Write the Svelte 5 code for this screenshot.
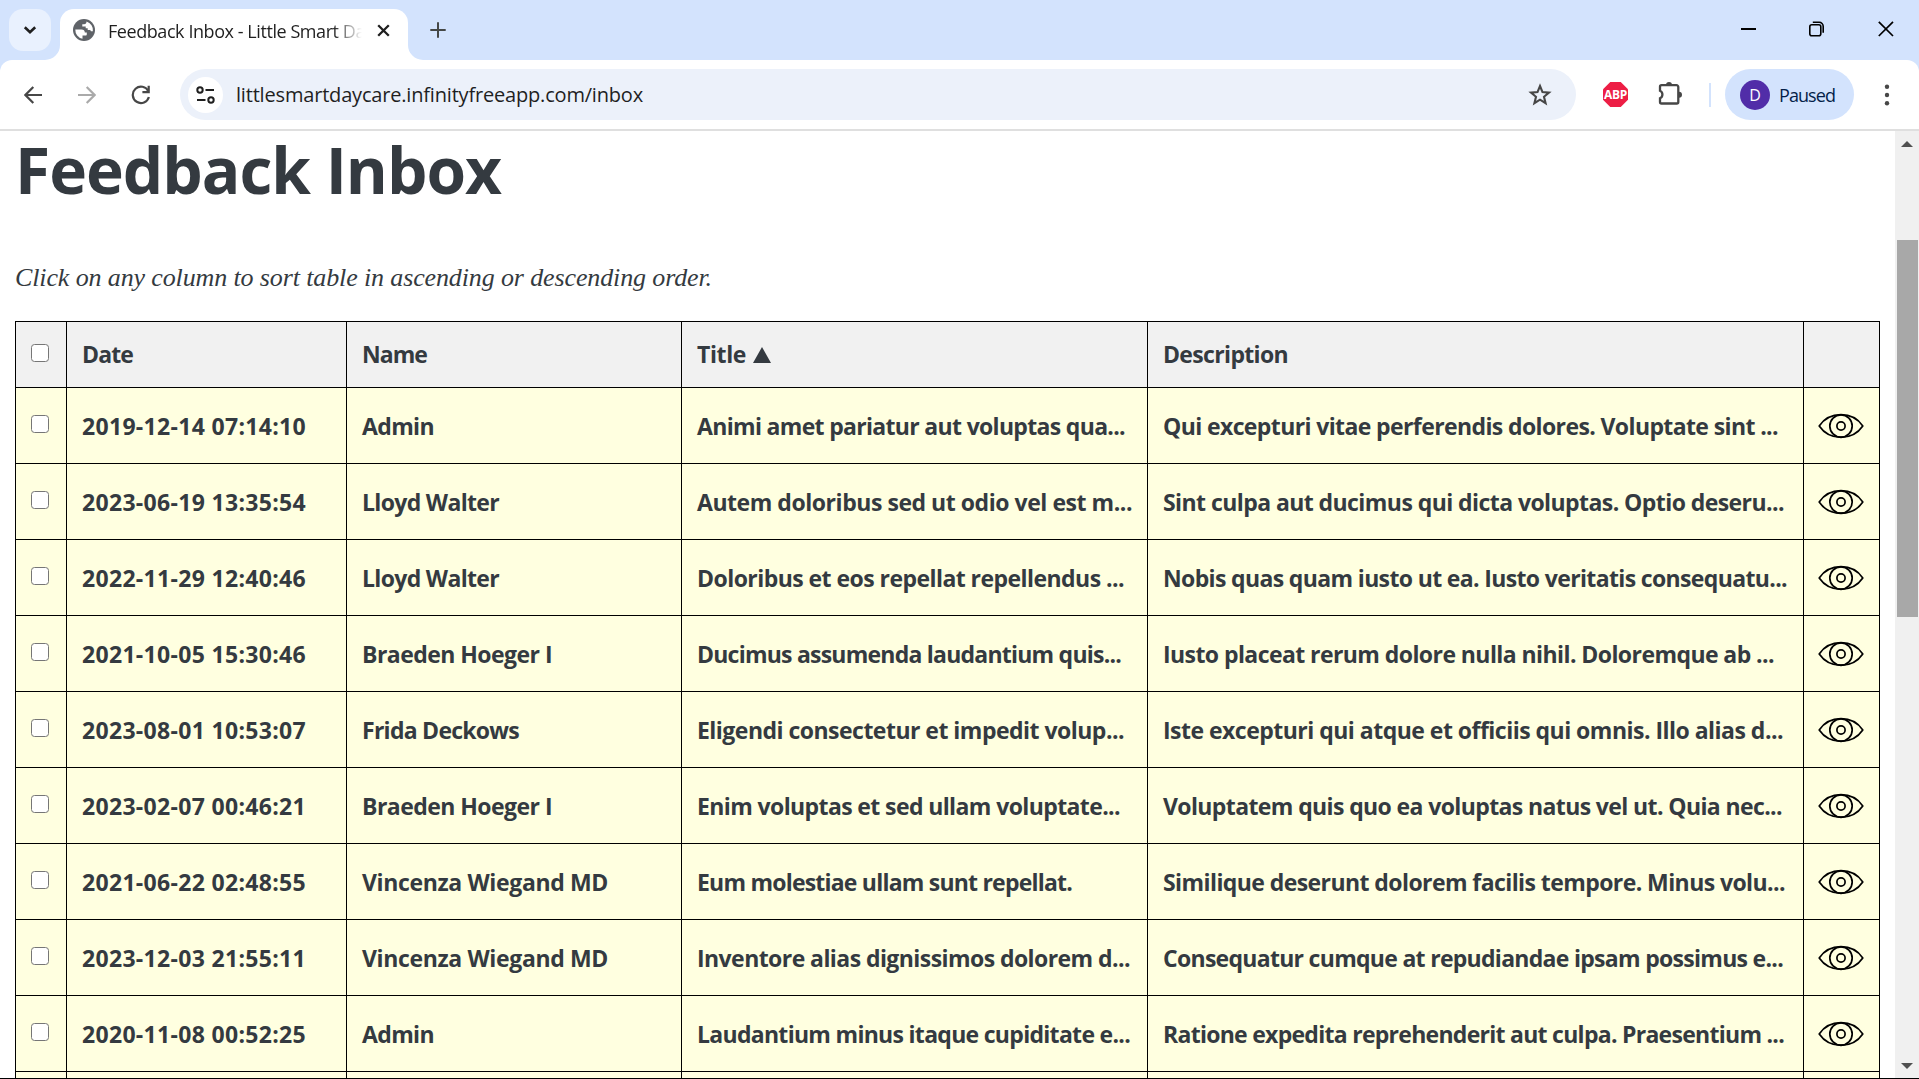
<script>
  // Letter-spacing is computed so each label takes the given width in pixels.
  function fit(node, width) {
    const range = document.createRange();
    const apply = (w) => {
      if (!w) return;
      node.style.letterSpacing = '0px';
      range.selectNodeContents(node);
      const natural = range.getBoundingClientRect().width;
      node.style.letterSpacing = (w - natural) / node.textContent.length + 'px';
    };
    apply(width);
    return { update: apply };
  }

  const headers = [
    { label: 'Date', w: 51 },
    { label: 'Name', w: 65 },
    { label: 'Title', w: 49, sorted: true },
    { label: 'Description', w: 125 },
  ];

  const rows = [
    [['2019-12-14 07:14:10', 224], ['Admin', 72], ['Animi amet pariatur aut voluptas qua...', 428], ['Qui excepturi vitae perferendis dolores. Voluptate sint ...', 615]],
    [['2023-06-19 13:35:54', 224], ['Lloyd Walter', 137], ['Autem doloribus sed ut odio vel est m...', 435], ['Sint culpa aut ducimus qui dicta voluptas. Optio deseru...', 621]],
    [['2022-11-29 12:40:46', 224], ['Lloyd Walter', 137], ['Doloribus et eos repellat repellendus ...', 427], ['Nobis quas quam iusto ut ea. Iusto veritatis consequatu...', 624]],
    [['2021-10-05 15:30:46', 224], ['Braeden Hoeger I', 190], ['Ducimus assumenda laudantium quis...', 424], ['Iusto placeat rerum dolore nulla nihil. Doloremque ab ...', 611]],
    [['2023-08-01 10:53:07', 224], ['Frida Deckows', 157], ['Eligendi consectetur et impedit volup...', 427], ['Iste excepturi qui atque et officiis qui omnis. Illo alias d...', 620]],
    [['2023-02-07 00:46:21', 224], ['Braeden Hoeger I', 190], ['Enim voluptas et sed ullam voluptate...', 423], ['Voluptatem quis quo ea voluptas natus vel ut. Quia nec...', 619]],
    [['2021-06-22 02:48:55', 224], ['Vincenza Wiegand MD', 246], ['Eum molestiae ullam sunt repellat.', 375], ['Similique deserunt dolorem facilis tempore. Minus volu...', 622]],
    [['2023-12-03 21:55:11', 224], ['Vincenza Wiegand MD', 246], ['Inventore alias dignissimos dolorem d...', 433], ['Consequatur cumque at repudiandae ipsam possimus e...', 620]],
    [['2020-11-08 00:52:25', 224], ['Admin', 72], ['Laudantium minus itaque cupiditate e...', 433], ['Ratione expedita reprehenderit aut culpa. Praesentium ...', 621]],
  ];
</script>

<div class="window">
  <div class="tabstrip">
    <button class="tabsearch" aria-label="Search tabs">
      <svg width="14" height="10" viewBox="0 0 14 10"><path d="M1.8 2.2 7 7.2l5.200-5" fill="none" stroke="#1f1f1f" stroke-width="2.6" /></svg>
    </button>
    <div class="tab">
      <svg class="flare" width="15" height="15" viewBox="0 0 15 15"><path d="M15 0v15H0A15 15 0 0 0 15 0Z" fill="#fff" /></svg>
      <div class="tabbody">
        <svg class="globe" width="22" height="22" viewBox="0 0 22 22">
          <circle cx="11" cy="11" r="11" fill="#5f6368" />
          <path d="M2.300 10.600h6.200c2.200 0 3.300 1.200 3.300 3h2v1.700c0 .8-.4 1.300-1.200 1.300H9.500v3.200A9 9 0 0 1 2.300 10.600Z" fill="#fff" />
          <path d="M13.500 2.500c0 1.700-.8 2.700-2.400 2.700H9.300v2.200h3.400v1.800h2v1.700h1.700c1 0 1.200.5 1.500 1.400h2A9 9 0 0 0 13.500 2.500Z" fill="#fff" />
        </svg>
        <span class="tabtitle"><span use:fit={257}>Feedback Inbox - Little Smart Da</span></span>
        <svg class="tabclose" width="13" height="13" viewBox="0 0 13 13"><path d="m1.200 1.200 10.600 10.600m0-10.600L1.200 11.800" stroke="#1f1f1f" stroke-width="2.3" /></svg>
      </div>
      <svg class="flare" width="15" height="15" viewBox="0 0 15 15"><path d="M0 0v15h15A15 15 0 0 1 0 0Z" fill="#fff" /></svg>
    </div>
    <svg class="plus" width="16" height="16" viewBox="0 0 16 16"><path d="M8 .3v15.400M.3 8h15.400" stroke="#444746" stroke-width="2" /></svg>
    <div class="controls">
      <svg width="16" height="16" viewBox="0 0 16 16"><path d="M1 8h15" stroke="#000" stroke-width="2" /></svg>
      <svg width="16" height="16" viewBox="0 0 16 16"><g fill="none" stroke="#000" stroke-width="1.600"><rect x=".8" y="3.800" width="11" height="11" rx="2" /><path d="M3.800 1.300h6.200a4 4 0 0 1 4.200 4.200v6.300" /></g></svg>
      <svg width="16" height="16" viewBox="0 0 16 16"><path d="m.8.8 14.200 14.200m0-14.200L.8 15" stroke="#000" stroke-width="1.700" /></svg>
    </div>
  </div>

  <div class="toolbar">
    <svg width="18" height="18" viewBox="0 0 18 18"><path d="M18 9H2M9.300 1 1.400 9l7.900 8" fill="none" stroke="#474747" stroke-width="2.200" /></svg>
    <svg class="forward" width="18" height="18" viewBox="0 0 18 18"><path d="M0 9h16M8.700 1l7.900 8-7.900 8" fill="none" stroke="#aaa" stroke-width="2.200" /></svg>
    <svg class="reload" width="20" height="20" viewBox="0 0 20 20"><path d="M17.400 6.300A8.200 8.200 0 1 0 17.900 12" fill="none" stroke="#474747" stroke-width="2.200" /><path d="M18.800.8v7.400h-7.400V6h5.200V.8Z" fill="#474747" /></svg>
    <div class="omnibox">
      <span class="site">
        <svg width="19" height="18" viewBox="0 0 19 18"><g fill="none" stroke="#1f1f1f" stroke-width="2"><circle cx="4" cy="4" r="2.700" /><path d="M9.500 4H18M1 14h8.500" /><circle cx="15" cy="14" r="2.700" /></g></svg>
      </span>
      <span class="url" use:fit={407}>littlesmartdaycare.infinityfreeapp.com/inbox</span>
      <svg class="star" width="24" height="24" viewBox="0 0 24 24"><path d="m12 3 2.500 6.100 6.500.5-5 4.200 1.600 6.400-5.600-3.500-5.600 3.500L8 13.800 3 9.600l6.500-.5Z" fill="none" stroke="#474747" stroke-width="2.100" /></svg>
    </div>
    <span class="abp"><span use:fit={23}>ABP</span></span>
    <svg class="puzzle" width="25" height="25" viewBox="0 0 25 25">
      <path d="M3.500 4.200h15a1.800 1.800 0 0 1 1.800 1.800v15a1.500 1.500 0 0 1-1.500 1.500H3.500A1.500 1.500 0 0 1 2 21v-3.700a4.200 4.200 0 0 0 0-7.600V5.700a1.500 1.500 0 0 1 1.500-1.500Z" fill="none" stroke="#474747" stroke-width="2.300" />
      <path d="M8 4a3 3 0 0 1 6 0ZM21 10.700a3 3 0 0 1 0 6Z" fill="#474747" />
    </svg>
    <span class="divider"></span>
    <div class="profile">
      <span class="avatar">D</span>
      <span class="paused"><span use:fit={56}>Paused</span></span>
    </div>
    <svg class="dots" width="6" height="22" viewBox="0 0 6 22"><g fill="#474747"><circle cx="3" cy="2.700" r="2.200" /><circle cx="3" cy="11" r="2.200" /><circle cx="3" cy="19.300" r="2.200" /></g></svg>
  </div>

  <div class="viewport">
    <main>
      <h1><span use:fit={486}>Feedback Inbox</span></h1>
      <p><span use:fit={697}>Click on any column to sort table in ascending or descending order.</span></p>
      <table>
        <colgroup>
          <col class="c-check" /><col class="c-date" /><col class="c-name" /><col class="c-title" /><col class="c-desc" /><col class="c-eye" />
        </colgroup>
        <thead>
          <tr>
            <th><input type="checkbox" aria-label="Select all" /></th>
            {#each headers as h}
              <th><span use:fit={h.w}>{h.label}</span>{#if h.sorted}<svg class="sort" width="18" height="16" viewBox="0 0 18 16"><path d="M9 0 18 16H0Z" fill="#343a40" /></svg>{/if}</th>
            {/each}
            <th></th>
          </tr>
        </thead>
        <tbody>
          {#each rows as row}
            <tr>
              <td><input type="checkbox" aria-label="Select message" /></td>
              {#each row as [text, w]}
                <td><span use:fit={w}>{text}</span></td>
              {/each}
              <td class="eye">
                <svg width="46" height="26" viewBox="0 0 46 26"><g fill="none" stroke="#000" stroke-width="1.700"><path d="M1.200 13C6 6 14 1.700 23 1.700S40 6 44.800 13C40 20 32 24.300 23 24.300S6 20 1.200 13Z" stroke-linejoin="round" /><circle cx="23" cy="13" r="11.200" /><circle cx="23" cy="13" r="4.100" /></g></svg>
              </td>
            </tr>
          {/each}
          <tr class="next"><td></td><td></td><td></td><td></td><td></td><td></td></tr>
        </tbody>
      </table>
    </main>
    <div class="scrollbar">
      <svg width="12" height="6" viewBox="0 0 12 6"><path d="M6 0l6 6H0Z" fill="#505050" /></svg>
      <span class="thumb"></span>
      <svg class="down" width="12" height="6" viewBox="0 0 12 6"><path d="M0 0h12L6 6Z" fill="#505050" /></svg>
    </div>
  </div>
</div>

<style>
  :global(body) { margin: 0; background: #d3e3fd; }
  .window {
    box-sizing: border-box;
    width: 1919px;
    height: 1079px;
    display: flex;
    flex-direction: column;
    overflow: hidden;
    border-bottom: 1px solid #000;
    background: #d3e3fd;
    font-family: "Open Sans", "Noto Sans", sans-serif;
    white-space: nowrap;
  }
  svg { display: block; flex: none; }

  .tabstrip { height: 60px; flex: none; display: flex; align-items: flex-start; }
  .tabsearch {
    width: 42px; height: 42px; margin: 9px 0 0 9px; padding: 0; border: 0; border-radius: 14px;
    background: #e9f1fe; display: flex; align-items: center; justify-content: center;
  }
  .tab { display: flex; align-items: flex-end; height: 60px; margin-left: -6px; }
  .tabbody {
    box-sizing: border-box; width: 348px; height: 51px; padding: 0 18px 9px 13px;
    display: flex; align-items: center; background: #fff; border-radius: 14px 14px 0 0;
  }
  .tabtitle {
    width: 260px; margin-left: 13px; font-size: 18px; line-height: 26px; color: #1f1f1f;
    padding-top: 2px;
    -webkit-mask-image: linear-gradient(90deg, #000 225px, transparent 254px);
    mask-image: linear-gradient(90deg, #000 225px, transparent 254px);
  }
  .tabclose { margin-left: auto; }
  .plus { margin: 22px 0 0 7px; }
  .controls { display: flex; gap: 53px; margin: 21px 25px 0 auto; }

  .toolbar {
    box-sizing: border-box; height: 71px; flex: none; display: flex; align-items: center; padding-left: 24px;
    border-bottom: 2px solid #dfdfdf; background: #fff; border-radius: 12px 12px 0 0;
  }
  .forward { margin-left: 36px; }
  .reload { margin-left: 35px; }
  .omnibox {
    box-sizing: border-box; width: 1396px; height: 51px; margin-left: 29px; padding: 0 24px 0 8px;
    display: flex; align-items: center; border-radius: 26px; background: #ecf1fa;
  }
  .site { width: 35px; height: 36px; border-radius: 50%; background: #fff; display: flex; align-items: center; justify-content: center; }
  .url { margin-left: 13px; font-size: 20px; line-height: 28px; color: #1f1f1f; }
  .star { margin-left: auto; }
  .abp {
    width: 25px; height: 25px; margin-left: 27px; display: flex; align-items: center; justify-content: center;
    background: #ed1e45; color: #fff; font-size: 12px; font-weight: 700;
    clip-path: polygon(29% 0, 71% 0, 100% 29%, 100% 71%, 71% 100%, 29% 100%, 0 71%, 0 29%);
  }
  .puzzle { margin: -3px 0 0 30px; }
  .divider { width: 2px; height: 24px; margin-left: 26px; background: #d3e3fd; }
  .profile {
    box-sizing: border-box; width: 129px; height: 51px; margin-left: 14px; padding-left: 15px;
    display: flex; align-items: center; border-radius: 26px; background: #d3e3fd; color: #041e49; font-size: 18px;
  }
  .avatar {
    width: 30px; height: 30px; border-radius: 50%; background: #512da8; color: #fff;
    font-size: 16px; line-height: 30px; text-align: center;
  }
  .paused { margin-left: 9px; }
  .dots { margin-left: 30px; }

  .viewport { flex: 1; min-height: 0; display: flex; background: #fff; color: #343a40; }
  main { flex: 1; min-width: 0; padding-left: 15px; }
  h1 { margin: 0; font-size: 64px; line-height: 78px; font-weight: 700; }
  p { margin: 53px 0 0; font: italic 26px/32px "Liberation Serif", serif; }

  table { width: 1865px; margin-top: 27px; table-layout: fixed; border-collapse: collapse; font-size: 23px; font-weight: 700; }
  .c-check { width: 51px; }
  .c-date { width: 280px; }
  .c-name { width: 335px; }
  .c-title { width: 466px; }
  .c-desc { width: 656px; }
  .c-eye { width: 76px; }
  th, td { box-sizing: border-box; border: 1px solid #000; padding: 0 0 0 15px; text-align: left; vertical-align: middle; line-height: 32px; }
  th { height: 66px; padding-bottom: 1px; background: #f1f1f1; }
  td { height: 76px; background: #ffffe0; }
  .next td { height: 40px; }
  td.eye { padding: 0 1px 0 0; }
  td.eye svg { margin: 0 auto; }
  .sort { display: inline-block; margin-left: 7px; vertical-align: 0; }
  input {
    appearance: none; display: block; box-sizing: border-box; width: 18px; height: 18px; margin: -3px 0 0;
    border: 1.500px solid #767676; border-radius: 3.500px; background: #fff;
  }

  .scrollbar {
    box-sizing: border-box; width: 24px; flex: none; padding: 10px 0 9px; display: flex; flex-direction: column;
    align-items: center; background: #f0f0f0;
  }
  .thumb { width: 21px; height: 377px; margin: 93px 0 0 1px; background: #a8a8a8; }
  .down { margin-top: auto; }
</style>
